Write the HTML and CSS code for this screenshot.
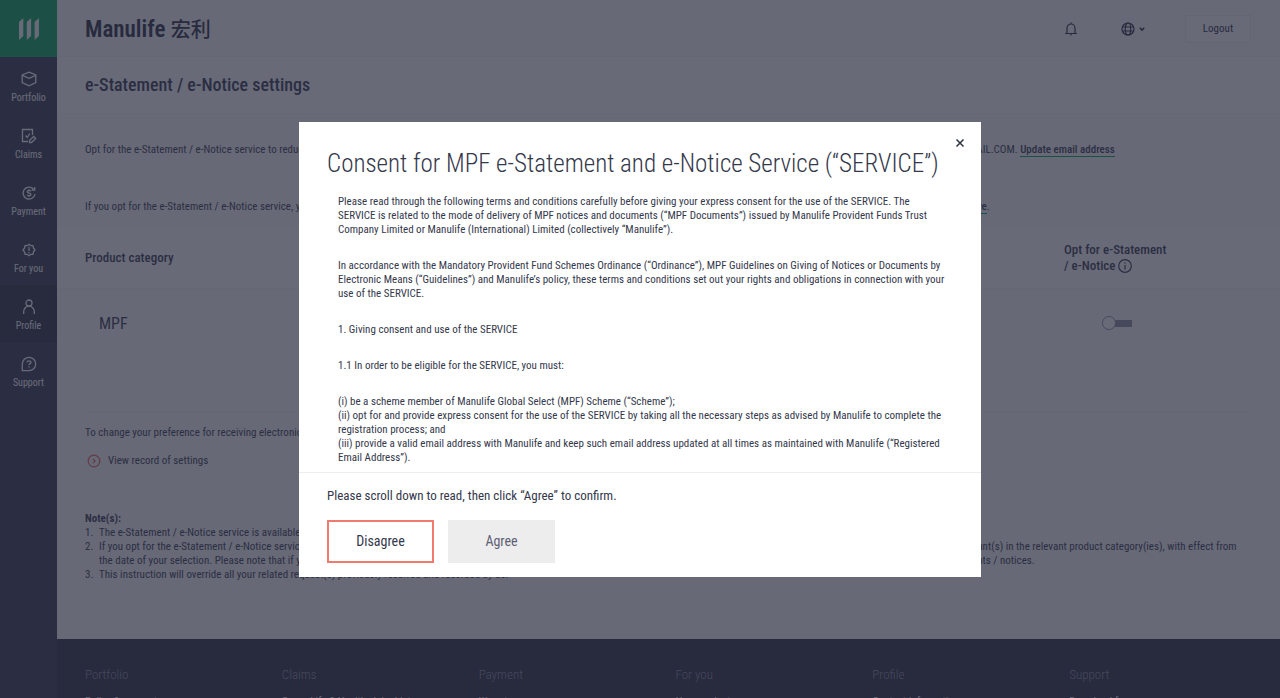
FILE: index.html
```html
<!DOCTYPE html>
<html lang="en">
<head>
<meta charset="utf-8">
<meta name="viewport" content="width=device-width, initial-scale=1">
<title>e-Statement / e-Notice settings</title>
<link rel="stylesheet" href="styles.css">
</head>
<body>
<div class="shell">
  <nav class="sidebar" aria-label="Main">
    <a class="brand" href="#" aria-label="Manulife home">
      <svg width="22" height="22" viewBox="0 0 22 22"><path d="M1 4 5.300 0V18L1 22ZM8.800 4 13.100 0V18L8.800 22ZM16.600 4 20.900 0V18L16.600 22Z"/></svg>
    </a>
    <a class="nav-item" href="#">
      <svg class="icon" viewBox="0 0 16 16"><path d="M8 1.200 14.800 3.900V11.500L8 14.800 1.200 11.500V3.900ZM1.200 4.300 8 7.300 14.800 4.300"/></svg>
      <span>Portfolio</span>
    </a>
    <a class="nav-item" href="#">
      <svg class="icon" viewBox="0 0 16 16"><path d="M11.500 7V1.500H1.500V13.500H7M4.500 7.500 6.300 9.500 8.800 5.500M8.500 14.500V12.500L12.700 8.500 14.700 10.500 10.500 14.500Z"/></svg>
      <span>Claims</span>
    </a>
    <a class="nav-item" href="#">
      <svg class="icon" viewBox="0 0 16 16"><path d="M12.500 4A6 6 0 1 0 14 9M13.700 2V5H10.700M10 6.200C9.500 5.300 6.300 5.100 6.300 6.700S10 7.800 10 9.400 6.700 10.900 6 9.800M8.100 4.300V5.500M8.100 10.500V11.900"/></svg>
      <span>Payment</span>
    </a>
    <a class="nav-item" href="#">
      <svg class="icon" viewBox="0 0 16 16"><path d="M8 2.300 9.700 3.700 12 3.600 12.400 5.900 14 8 12.400 10 12 12.400 9.700 12.300 8 13.700 6.300 12.300 4 12.400 3.600 10 2 8 3.600 5.900 4 3.600 6.300 3.700ZM8 5V9M8 10V11.300"/></svg>
      <span>For you</span>
    </a>
    <a class="nav-item nav-item-active" href="#" aria-current="page">
      <svg class="icon" viewBox="0 0 16 16"><circle cx="8" cy="4" r="3"/><path d="M2.700 15V12.500A5.300 5.300 0 0 1 13.300 12.500V15"/></svg>
      <span>Profile</span>
    </a>
    <a class="nav-item" href="#">
      <svg class="icon" viewBox="0 0 16 16"><path d="M1.300 14.700V8A6.700 6.700 0 1 1 8 14.700ZM6 6.300C6 4.300 10 4.300 10 6.300 10 7.700 8 7.500 8 9M8 10.300V11.600"/></svg>
      <span>Support</span>
    </a>
  </nav>

  <div class="page">
    <header class="topbar">
      <div class="wordmark">Manulife <span class="wordmark-cn" lang="zh-Hant">宏利</span></div>
      <div class="tools">
        <button class="tool" type="button" aria-label="Notifications">
          <svg class="bell" viewBox="0 0 14 14"><path d="M1 11.500H13M3 11.500V6A4 4 0 0 1 11 6V11.500M7 .500V2M7 11.500V13.500"/></svg>
        </button>
        <button class="tool language" type="button" aria-label="Language">
          <svg class="globe" viewBox="0 0 14 14"><circle cx="7" cy="7" r="6"/><ellipse cx="7" cy="7" rx="2.700" ry="6"/><path d="M1.500 5H12.500M1.500 9H12.500"/></svg>
          <svg class="chevron" viewBox="0 0 6 6"><path d="M.800 1.800 3 4 5.200 1.800"/></svg>
        </button>
        <button class="logout" type="button">Logout</button>
      </div>
    </header>

    <div class="title-row"><h1>e-Statement / e-Notice settings</h1></div>

    <main>
      <section class="intro">
        <p>Opt for the e-Statement / e-Notice service to reduce paper consumption. We will send the notifications to your registered email address once your statements and notices are available: POLICYMEMBER@GMAIL.COM. <a class="link" href="#">Update email address</a></p>
        <p>If you opt for the e-Statement / e-Notice service, you can view and download your statements and notices online at any time from this new website. For the terms and conditions of the service, please click <a class="link" href="#">here</a>.</p>
      </section>

      <section class="category-head">
        <h2>Product category</h2>
        <h2>Opt for e-Statement<br>/ e-Notice
          <svg class="info" viewBox="0 0 14 14"><circle cx="7" cy="7" r="6.300"/><path d="M7 6V10.500M7 3.500V4.800"/></svg>
        </h2>
      </section>
      <section class="category-row">
        <label for="mpf">MPF</label>
        <div><input class="switch" id="mpf" type="checkbox" role="switch"></div>
      </section>

      <section class="record">
        <p>To change your preference for receiving electronic marketing materials, please update your profile.</p>
        <a class="record-link" href="#">
          <svg class="go" viewBox="0 0 14 14"><circle cx="7" cy="7" r="5.800"/><path d="M6 4.800 8.200 7 6 9.200"/></svg>
          View record of settings
        </a>
      </section>

      <section class="notes">
        <h3>Note(s):</h3>
        <ol>
          <li>The e-Statement / e-Notice service is available to selected products only.</li>
          <li>If you opt for the e-Statement / e-Notice service, we will stop sending the printed copies of the documents by post and you will only receive the electronic versions of the related document(s) for your account(s) in the relevant product category(ies), with effect from the date of your selection. Please note that if you opt out of the service or change your preference at a later date, it may take some time before the change is applied to the delivery of your printed statements / notices.</li>
          <li>This instruction will override all your related request(s) previously received and recorded by us.</li>
        </ol>
      </section>
    </main>

    <footer class="footer">
      <div><h4>Portfolio</h4><a href="#">Policy &amp; account</a></div>
      <div><h4>Claims</h4><a href="#">Group Life &amp; Health claim history</a></div>
      <div><h4>Payment</h4><a href="#">Ways to pay</a></div>
      <div><h4>For you</h4><a href="#">New products</a></div>
      <div><h4>Profile</h4><a href="#">Contact information</a></div>
      <div><h4>Support</h4><a href="#">Download forms</a></div>
    </footer>
  </div>
</div>

<div class="backdrop">
  <div class="modal" role="dialog" aria-modal="true" aria-labelledby="consent-title">
    <button class="close" type="button" aria-label="Close">
      <svg viewBox="0 0 10 10"><path d="M1.500 1.500 8.500 8.500M8.500 1.500 1.500 8.500"/></svg>
    </button>
    <h2 class="modal-title" id="consent-title">Consent for MPF e-Statement and e-Notice Service (“SERVICE”)</h2>
    <div class="terms" tabindex="0">
      <p>Please read through the following terms and conditions carefully before giving your express consent for the use of the SERVICE. The SERVICE is related to the mode of delivery of MPF notices and documents (“MPF Documents”) issued by Manulife Provident Funds Trust Company Limited or Manulife (International) Limited (collectively “Manulife”).</p>
      <p>In accordance with the Mandatory Provident Fund Schemes Ordinance (“Ordinance”), MPF Guidelines on Giving of Notices or Documents by Electronic Means (“Guidelines”) and Manulife’s policy, these terms and conditions set out your rights and obligations in connection with your use of the SERVICE.</p>
      <p>1. Giving consent and use of the SERVICE</p>
      <p>1.1 In order to be eligible for the SERVICE, you must:</p>
      <p>(i) be a scheme member of Manulife Global Select (MPF) Scheme (“Scheme”);<br>(ii) opt for and provide express consent for the use of the SERVICE by taking all the necessary steps as advised by Manulife to complete the registration process; and<br>(iii) provide a valid email address with Manulife and keep such email address updated at all times as maintained with Manulife (“Registered Email Address”).</p>
    </div>
    <div class="modal-foot">
      <p>Please scroll down to read, then click “Agree” to confirm.</p>
      <div class="actions">
        <button class="btn btn-outline" type="button">Disagree</button>
        <button class="btn btn-muted" type="button" disabled>Agree</button>
      </div>
    </div>
  </div>
</div>
</body>
</html>
```
FILE: styles.css
```css
* { box-sizing: border-box; }

body {
  margin: 0;
  font: 400 11px/14px "Roboto Condensed", Roboto, "Liberation Sans", sans-serif;
  color: #34384b;
  background: #fff;
}

h1, h2, h3, h4, p, ol { margin: 0; padding: 0; font-weight: 500; }
p, ol { font-weight: 400; }
a { color: inherit; text-decoration: none; }
button { font: inherit; color: inherit; border: 0; padding: 0; background: none; }
svg { display: block; fill: none; stroke: currentColor; }

.shell { display: flex; height: 100vh; overflow: hidden; }

/* Sidebar */
.sidebar { flex: none; width: 57px; background: #34384b; }
.brand {
  display: flex; align-items: center; justify-content: center;
  height: 57px; background: #00a758;
}
.brand svg { stroke: none; fill: #fff; }
.nav-item {
  display: flex; flex-direction: column; align-items: center; gap: 4px;
  height: 57px; padding-top: 14px;
  color: #fff; font-size: 10px;
}
.nav-item-active { background: #282b3e; }
.icon { width: 16px; height: 16px; stroke-width: 1.3; }

/* Page */
.page { flex: 1; min-width: 0; background: #fff; }
.topbar {
  display: flex; align-items: center; justify-content: space-between;
  height: 57px; padding: 2px 29px 0 28px;
  background: #fafafa; border-bottom: 1px solid #f5f5f5;
}
.wordmark { color: #282b3e; font-size: 23px; line-height: 28px; font-weight: 600; }
.wordmark-cn { font: 500 20px/28px "Noto Sans CJK TC", sans-serif; }
.tools { display: flex; align-items: center; color: #282b3e; }
.tool { display: flex; align-items: center; gap: 4px; margin-right: 43px; }
.bell, .globe { width: 14px; height: 14px; stroke-width: 1.2; }
.chevron { width: 6px; height: 6px; stroke-width: 1.6; }
.language { margin-right: 40px; }
.logout {
  width: 66px; height: 28px;
  background: #fff; border: 1px solid #ededed;
}
.title-row {
  display: flex; align-items: center;
  height: 57px; padding: 0 28px; border-bottom: 1px solid #f5f5f5;
}
h1 { font-size: 18px; line-height: 22px; }

.intro, .category-row, .record, .notes { background: #fafafa; }
.intro { display: grid; gap: 43px; padding: 29px 28px 14px; white-space: nowrap; }
.link { font-weight: 500; border-bottom: 1px solid #00a758; }

.category-head, .category-row {
  display: grid; grid-template-columns: 1fr 188px;
  padding: 0 28px;
}
.category-head { align-items: center; height: 61px; background: #fff; border-bottom: 1px solid #f3f3f3; }
h2 { font-size: 13px; line-height: 16px; }
.info { display: inline-block; width: 14px; height: 14px; vertical-align: -3px; stroke-width: 1.2; }
.category-row { align-items: start; height: 122px; padding-top: 25px; }
.category-row label { padding-left: 14px; font-size: 16px; line-height: 20px; }
.category-row div { padding-left: 38px; }
.switch {
  appearance: none; display: flex; align-items: center;
  width: 30px; height: 14px; margin: 2px 0 0;
  background: linear-gradient(#8e90a2, #8e90a2) right / 24px 7px no-repeat;
  border-radius: 4px;
}
.switch::before {
  content: ""; box-sizing: border-box; width: 14px; height: 14px;
  border: 1px solid #8e90a2; border-radius: 50%; background: #fff;
}

.record { padding: 0 28px 44px; }
.record p { padding-top: 14px; border-top: 1px solid #f0f0f0; white-space: nowrap; }
.record-link { display: flex; align-items: center; gap: 7px; margin-top: 14px; padding-left: 2px; }
.go { width: 14px; height: 14px; color: #ec6453; stroke-width: 1.2; }

.notes { padding: 0 28px 57px; }
.notes h3 { font-size: 11px; font-weight: 700; }
.notes ol { list-style: none; counter-reset: note; }
.notes li { display: grid; grid-template-columns: 14px 1fr; counter-increment: note; }
.notes li::before { content: counter(note) "."; }

/* Footer */
.footer {
  display: grid; grid-template-columns: repeat(6, 1fr);
  padding: 28px 14px 28px 28px;
  color: #fff; background: #282b3e;
}
.footer h4 { margin-bottom: 12px; font-size: 13px; line-height: 16px; font-weight: 300; color: #8e90a2; }

/* Consent dialog */
.backdrop {
  position: fixed; inset: 0;
  display: flex; align-items: center; justify-content: center;
  background: rgba(40, 43, 62, .7);
}
.modal {
  position: relative; display: flex; flex-direction: column;
  width: min(682px, 94vw); max-height: min(455px, 94vh);
  background: #fff;
}
.close { position: absolute; top: 16px; right: 16px; }
.close svg { width: 10px; height: 10px; stroke-width: 1.6; }
.modal-title { padding: 27px 28px 16px; font-size: 25px; line-height: 30px; font-weight: 300; }
.terms {
  flex: 1; min-height: 0; overflow-y: auto; scrollbar-width: none;
  display: grid; gap: 22px; padding: 0 34px 7px 39px;
}
.modal-foot { padding: 14px 28px; border-top: 1px solid #ededed; }
.modal-foot p { font-size: 13px; line-height: 18px; }
.actions { display: flex; gap: 14px; margin-top: 15px; }
.btn { width: 107px; height: 43px; font-size: 14px; }
.btn-outline { border: 2px solid #f07a6e; }
.btn-muted { color: #5e6073; background: #ededed; }
```
